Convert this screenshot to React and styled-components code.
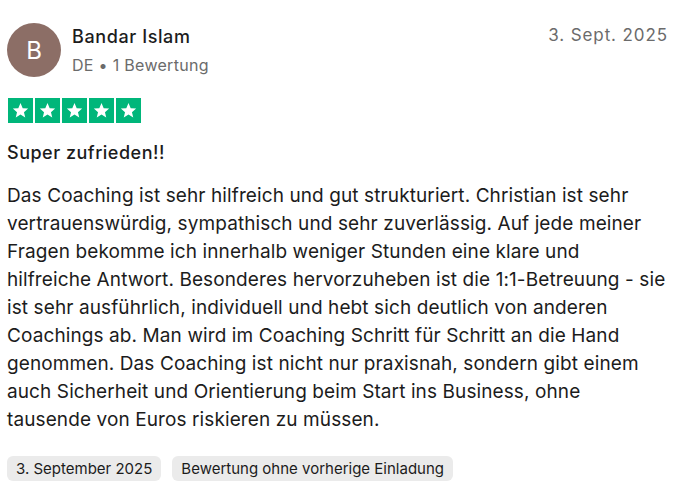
import React from 'react';
import styled, { createGlobalStyle } from 'styled-components';

const GlobalStyle = createGlobalStyle`
  html, body {
    margin: 0;
    padding: 0;
    background: #ffffff;
  }
  body {
    font-family: Inter, 'Noto Sans', sans-serif;
    color: #1c1c1c;
  }
`;

// Whole review card
const Card = styled.article`
  width: 695px;
  height: 485px;
  box-sizing: border-box;
  padding: 23px 27px 0 7px;
  display: flex;
  flex-direction: column;
  overflow: hidden;
`;

const Header = styled.header`
  display: flex;
  align-items: flex-start;
  justify-content: space-between;
`;

const Consumer = styled.div`
  display: flex;
  align-items: center;
  gap: 11px;
`;

const Avatar = styled.div`
  width: 54px;
  height: 54px;
  border-radius: 50%;
  background: #8c6e66;
  color: #ffffff;
  font-size: 24px;
  display: flex;
  align-items: center;
  justify-content: center;
`;

const Name = styled.div`
  font-size: 18px;
  font-weight: 500;
  letter-spacing: 0.6px;
  color: #1c1c1c;
  line-height: 26px;
`;

const Meta = styled.div`
  font-size: 16px;
  color: #6b6b6b;
  letter-spacing: 0.3px;
  line-height: 24px;
  margin-top: 3px;
`;

const DateLabel = styled.time`
  font-size: 17px;
  color: #6b6b6b;
  letter-spacing: 0.9px;
  line-height: 24px;
`;

const Stars = styled.div`
  display: flex;
  gap: 2px;
  margin-top: 21px;
  margin-left: 1px;
`;

const StarBox = styled.div`
  width: 25px;
  height: 25px;
  background: #00b67a;
  display: flex;
  align-items: center;
  justify-content: center;
`;

const Title = styled.h2`
  margin: 17px 0 0 0;
  font-size: 18px;
  font-weight: 500;
  letter-spacing: 0.5px;
  line-height: 26px;
  color: #1c1c1c;
`;

const Body = styled.p`
  margin: 16px 0 0 0;
  font-size: 19px;
  letter-spacing: 0.1px;
  line-height: 28px;
  color: #1c1c1c;
  white-space: nowrap;
`;

const Tags = styled.div`
  display: flex;
  gap: 11px;
  margin-top: 22px;
`;

const Tag = styled.span`
  background: #ebebeb;
  border-radius: 6px;
  padding: 0 9px;
  height: 25px;
  line-height: 25px;
  font-size: 15px;
  color: #1c1c1c;
`;

const Star = () => (
  <svg width="17" height="17" viewBox="0 0 24 24">
    <path fill="#ffffff" d="M12 1.5l3.1 7.2 7.7.6-5.9 5 1.8 7.6L12 17.8l-6.7 4.1 1.8-7.6-5.9-5 7.7-.6z" />
  </svg>
);

const lines = [
  'Das Coaching ist sehr hilfreich und gut strukturiert. Christian ist sehr',
  'vertrauenswürdig, sympathisch und sehr zuverlässig. Auf jede meiner',
  'Fragen bekomme ich innerhalb weniger Stunden eine klare und',
  'hilfreiche Antwort. Besonderes hervorzuheben ist die 1:1-Betreuung - sie',
  'ist sehr ausführlich, individuell und hebt sich deutlich von anderen',
  'Coachings ab. Man wird im Coaching Schritt für Schritt an die Hand',
  'genommen. Das Coaching ist nicht nur praxisnah, sondern gibt einem',
  'auch Sicherheit und Orientierung beim Start ins Business, ohne',
  'tausende von Euros riskieren zu müssen.',
];

export default function App() {
  return (
    <>
      <GlobalStyle />
      <Card>
        <Header>
          <Consumer>
            <Avatar>B</Avatar>
            <div>
              <Name>Bandar Islam</Name>
              <Meta>DE • 1 Bewertung</Meta>
            </div>
          </Consumer>
          <DateLabel>3. Sept. 2025</DateLabel>
        </Header>

        <Stars>
          {[0, 1, 2, 3, 4].map(i => (
            <StarBox key={i}><Star /></StarBox>
          ))}
        </Stars>

        <Title>Super zufrieden!!</Title>

        <Body>
          {lines.map((line, i) => (
            <React.Fragment key={i}>
              {line}
              {i < lines.length - 1 && <br />}
            </React.Fragment>
          ))}
        </Body>

        <Tags>
          <Tag>3. September 2025</Tag>
          <Tag>Bewertung ohne vorherige Einladung</Tag>
        </Tags>
      </Card>
    </>
  );
}
